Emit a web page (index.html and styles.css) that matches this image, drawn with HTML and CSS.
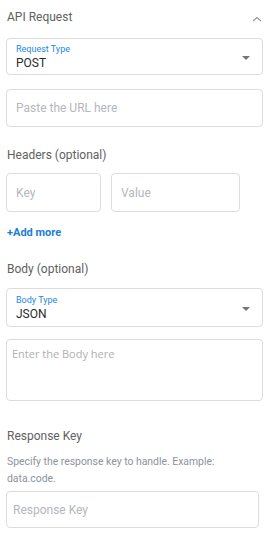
FILE: index.html
```html
<!DOCTYPE html>
<html lang="en">
<head>
    <meta charset="UTF-8">
    <meta name="viewport" content="width=device-width, initial-scale=1.0">
    <title>API Request</title>
    <link rel="stylesheet" href="styles.css">
</head>
<body>

    <div class="panel">
        <div class="panel-header">
            <span>API Request</span>
            <svg class="chevron" width="10" height="6" viewBox="0 0 10 6">
                <path d="M1 5 L5 1.5 L9 5" fill="none" stroke="#9a9a9a" stroke-width="1.2"/>
            </svg>
        </div>

        <div class="select-box">
            <div class="select-text">
                <div class="select-label">Request Type</div>
                <div class="select-value">POST</div>
            </div>
            <span class="caret"></span>
        </div>

        <input class="field url-field" type="text" placeholder="Paste the URL here">

        <div class="section-title headers-title">Headers (optional)</div>
        <div class="kv-row">
            <input class="field key-field" type="text" placeholder="Key">
            <input class="field value-field" type="text" placeholder="Value">
        </div>
        <a class="add-more" href="#">+Add more</a>

        <div class="section-title body-title">Body (optional)</div>
        <div class="select-box body-select">
            <div class="select-text">
                <div class="select-label">Body Type</div>
                <div class="select-value">JSON</div>
            </div>
            <span class="caret"></span>
        </div>

        <textarea class="body-area" placeholder="Enter the Body here"></textarea>

        <div class="section-title response-title">Response Key</div>
        <p class="helper">Specify the response key to handle. Example: data.code.</p>
        <input class="field response-field" type="text" placeholder="Response Key">
    </div>

</body>
</html>
```

FILE: styles.css
```css
body {
    font-family: Roboto, "Liberation Sans", Arial, sans-serif;
    background-color: #fff;
    margin: 0;
    padding: 0;
}

.panel {
    width: 257px;
    padding: 0 17px 0 6px;
}

.panel-header {
    display: flex;
    justify-content: space-between;
    align-items: center;
    height: 38px;
    padding-bottom: 4px;
    box-sizing: border-box;
    padding-left: 1px;
    font-size: 12px;
    color: #616161;
}

.chevron {
    margin-right: 1px;
    margin-top: 3px;
}

.select-box {
    display: flex;
    justify-content: space-between;
    align-items: center;
    height: 37px;
    box-sizing: border-box;
    border: 1px solid #dcdcdc;
    border-radius: 4px;
    padding: 0 12px 0 9px;
}

.select-text {
    padding-top: 1px;
}

.select-label {
    font-size: 9px;
    line-height: 12px;
    color: #1e88e5;
}

.select-value {
    font-size: 12px;
    line-height: 16px;
    color: #2a2a2a;
}

.caret {
    width: 0;
    height: 0;
    border-left: 4px solid transparent;
    border-right: 4px solid transparent;
    border-top: 4px solid #757575;
    margin-top: 2px;
}

.field {
    display: block;
    box-sizing: border-box;
    height: 38px;
    border: 1px solid #dcdcdc;
    border-radius: 4px;
    padding: 0 9px;
    font-family: Roboto, "Liberation Sans", Arial, sans-serif;
    font-size: 12px;
    color: #222;
    outline: none;
}

.field::placeholder {
    color: #b3b7bd;
}

.url-field {
    width: 100%;
    margin-top: 14px;
}

.section-title {
    font-size: 12px;
    line-height: 18px;
    color: #616161;
    padding-left: 1px;
}

.headers-title {
    margin-top: 19px;
}

.kv-row {
    display: flex;
    gap: 10px;
    margin-top: 9px;
}

.key-field {
    width: 95px;
    height: 39px;
}

.value-field {
    width: 129px;
    height: 39px;
}

.add-more {
    display: block;
    margin-top: 13px;
    padding-left: 1px;
    font-size: 11px;
    line-height: 16px;
    font-weight: bold;
    color: #1a7fd4;
    text-decoration: none;
}

.body-title {
    margin-top: 19px;
}

.body-select {
    margin-top: 10px;
    height: 39px;
}

.body-area {
    display: block;
    width: 100%;
    height: 62px;
    margin-top: 12px;
    box-sizing: border-box;
    border: 1px solid #dcdcdc;
    border-radius: 4px;
    padding: 6px 5px;
    font-family: "Open Sans", "Noto Sans", sans-serif;
    font-size: 11px;
    resize: none;
    outline: none;
}

.body-area::placeholder {
    color: #b0b0b0;
}

.response-title {
    margin-top: 26px;
}

.helper {
    margin: 8px 0 0;
    padding-left: 1px;
    font-size: 10.4px;
    line-height: 17px;
    color: #8c939b;
}

.response-field {
    width: 253px;
    height: 37px;
    margin-top: 4px;
    padding-left: 6px;
}
```
